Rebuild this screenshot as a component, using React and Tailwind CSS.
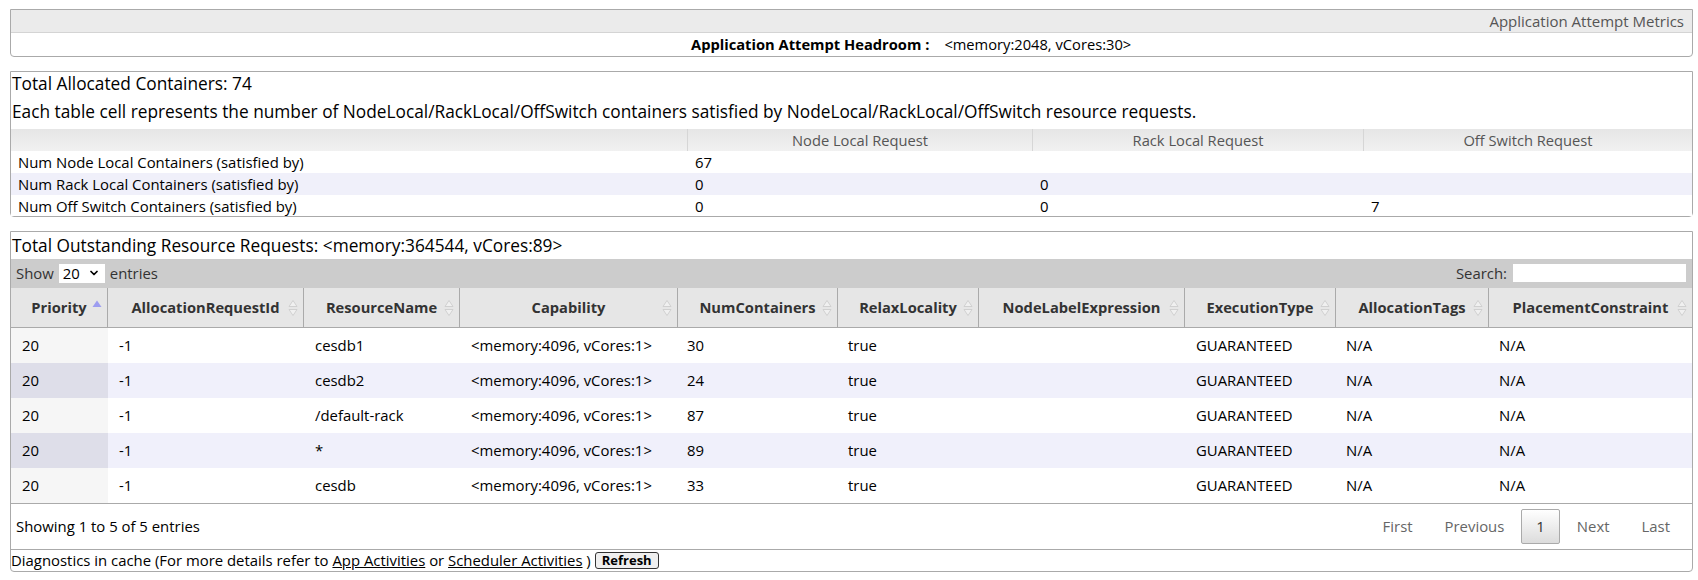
import React from 'react';
import { ChevronDown } from 'lucide-react';

const columns = [
  'Priority',
  'AllocationRequestId',
  'ResourceName',
  'Capability',
  'NumContainers',
  'RelaxLocality',
  'NodeLabelExpression',
  'ExecutionType',
  'AllocationTags',
  'PlacementConstraint',
];

const requests = [
  { priority: 20, id: -1, name: 'cesdb1', cap: '<memory:4096, vCores:1>', num: 30 },
  { priority: 20, id: -1, name: 'cesdb2', cap: '<memory:4096, vCores:1>', num: 24 },
  { priority: 20, id: -1, name: '/default-rack', cap: '<memory:4096, vCores:1>', num: 87 },
  { priority: 20, id: -1, name: '*', cap: '<memory:4096, vCores:1>', num: 89 },
  { priority: 20, id: -1, name: 'cesdb', cap: '<memory:4096, vCores:1>', num: 33 },
];

const locality = [
  ['Num Node Local Containers (satisfied by)', '67', '', ''],
  ['Num Rack Local Containers (satisfied by)', '0', '0', ''],
  ['Num Off Switch Containers (satisfied by)', '0', '0', '7'],
];

// datatables style sort markers
const SortBoth = () => (
  <svg width="10" height="18" viewBox="0 0 10 18">
    <polygon points="5,1.5 9,7.5 1,7.5" fill="#f0f0f0" stroke="#cdcdcd" strokeWidth="0.9" />
    <polygon points="1,10.5 9,10.5 5,16.5" fill="#f0f0f0" stroke="#cdcdcd" strokeWidth="0.9" />
  </svg>
);

const SortAsc = () => (
  <svg width="10" height="18" viewBox="0 0 10 18">
    <polygon points="5,1.5 9.5,8 0.5,8" fill="#9d9df0" />
  </svg>
);

const gridCols = 'grid grid-cols-[97px_196px_156px_218px_160px_141px_206px_151px_153px_1fr]';

const App = () => {
  return (
    <div className="bg-white pt-[9px] pb-[8px] pl-[10px] pr-[5px] font-['Open_Sans','Noto_Sans',sans-serif] text-[14.9px] text-black">
      {/* Application Attempt Metrics */}
      <div className="border border-[#aaa] rounded-b-[4px]">
        <div className="h-[23px] bg-[#ebebeb] border-b border-[#d4d4d4] flex items-center justify-end pr-[8px] text-[15px] text-[#555]">
          Application Attempt Metrics
        </div>
        <div className="h-[23px] flex items-center pl-[680px] gap-[15px] text-[14.7px]">
          <span className="font-bold">Application Attempt Headroom :</span>
          <span>&lt;memory:2048, vCores:30&gt;</span>
        </div>
      </div>

      {/* Allocated containers */}
      <div className="mt-[14px] border border-[#aaa] rounded-b-[4px]">
        <div className="pl-[1px] text-[17.3px] leading-[24px]">Total Allocated Containers: 74</div>
        <div className="pl-[1px] pt-[4px] pb-[5px] text-[17.3px] leading-[24px]">
          Each table cell represents the number of NodeLocal/RackLocal/OffSwitch containers satisfied by
          NodeLocal/RackLocal/OffSwitch resource requests.
        </div>
        <div className="grid grid-cols-[676px_345px_331px_1fr] h-[22px] bg-gradient-to-b from-[#e6e6e6] to-[#f1f1f1] text-[#555] text-[14.7px]">
          <div></div>
          <div className="border-l border-[#d6d6d6] flex items-center justify-center">Node Local Request</div>
          <div className="border-l border-[#d6d6d6] flex items-center justify-center">Rack Local Request</div>
          <div className="border-l border-[#d6d6d6] flex items-center justify-center">Off Switch Request</div>
        </div>
        {locality.map((row, i) => (
          <div
            key={i}
            className={`grid grid-cols-[676px_345px_331px_1fr] items-center ${i === 2 ? 'h-[21px]' : 'h-[22px]'} ${i % 2 === 1 ? 'bg-[#f0f0fa]' : 'bg-white'}`}
          >
            <div className="pl-[7px]">{row[0]}</div>
            <div className="pl-[8px]">{row[1]}</div>
            <div className="pl-[8px]">{row[2]}</div>
            <div className="pl-[8px]">{row[3]}</div>
          </div>
        ))}
      </div>

      {/* Outstanding resource requests */}
      <div className="mt-[14px] border border-[#aaa] rounded-b-[4px]">
        <div className="pl-[1px] text-[17.3px] leading-[27px]">
          Total Outstanding Resource Requests: &lt;memory:364544, vCores:89&gt;
        </div>

        <div className="h-[29px] bg-[#cccccc] flex items-center justify-between pl-[5px] pr-[6px] text-[#333]">
          <div className="flex items-center">
            <span>Show</span>
            <div className="ml-[5px] w-[46px] h-[19px] bg-white flex items-center justify-between pl-[4px] pr-[5px] text-black">
              <span>20</span>
              <ChevronDown size={12} strokeWidth={3.5} />
            </div>
            <span className="ml-[5px]">entries</span>
          </div>
          <div className="flex items-center">
            <span>Search:</span>
            <div className="ml-[6px] w-[173px] h-[18px] bg-white"></div>
          </div>
        </div>

        <div className={`${gridCols} h-[40px] bg-[#e6e6e6] border-b border-[#aaa] font-bold text-[#333] text-[14.7px]`}>
          {columns.map((col, i) => (
            <div
              key={col}
              className={`relative flex items-center justify-center ${i < columns.length - 1 ? 'border-r border-[#aaa]' : ''}`}
            >
              {col}
              <span className="absolute right-[5px] top-1/2 -translate-y-1/2 flex">
                {i === 0 ? <SortAsc /> : <SortBoth />}
              </span>
            </div>
          ))}
        </div>

        <div className="border-b border-[#aaa]">
          {requests.map((r, i) => (
            <div
              key={i}
              className={`${gridCols} h-[35px] items-center ${i % 2 === 1 ? 'bg-[#f0f0fb]' : 'bg-white'}`}
            >
              <div className={`h-full flex items-center pl-[11px] ${i % 2 === 1 ? 'bg-[#dedee9]' : 'bg-[#f6f6f6]'}`}>
                {r.priority}
              </div>
              <div className="pl-[11px]">{r.id}</div>
              <div className="pl-[11px]">{r.name}</div>
              <div className="pl-[11px]">{r.cap}</div>
              <div className="pl-[9px]">{r.num}</div>
              <div className="pl-[10px]">true</div>
              <div className="pl-[10px]"></div>
              <div className="pl-[11px]">GUARANTEED</div>
              <div className="pl-[10px]">N/A</div>
              <div className="pl-[10px]">N/A</div>
            </div>
          ))}
        </div>

        <div className="h-[46px] border-b border-[#aaa] flex items-center justify-between pl-[5px] pr-[7px]">
          <span>Showing 1 to 5 of 5 entries</span>
          <div className="flex items-center gap-[2px] text-[#666]">
            <span className="px-[15px]">First</span>
            <span className="px-[15px]">Previous</span>
            <span className="h-[35px] px-[14px] flex items-center border border-[#aaa] rounded-[2px] bg-gradient-to-b from-white to-[#dcdcdc] text-[#333]">
              1
            </span>
            <span className="px-[15px]">Next</span>
            <span className="px-[15px]">Last</span>
          </div>
        </div>

        <div className="h-[21px] flex items-center text-[14.9px]">
          <span>Diagnostics in cache (For more details refer to&nbsp;</span>
          <a className="underline">App Activities</a>
          <span>&nbsp;or&nbsp;</span>
          <a className="underline">Scheduler Activities</a>
          <span>&nbsp;)</span>
          <button className="ml-[4px] h-[17px] px-[6px] flex items-center border border-[#333] rounded-[3px] bg-[#efefef] text-[13px] font-bold">
            Refresh
          </button>
        </div>
      </div>
    </div>
  );
};

export default App;
